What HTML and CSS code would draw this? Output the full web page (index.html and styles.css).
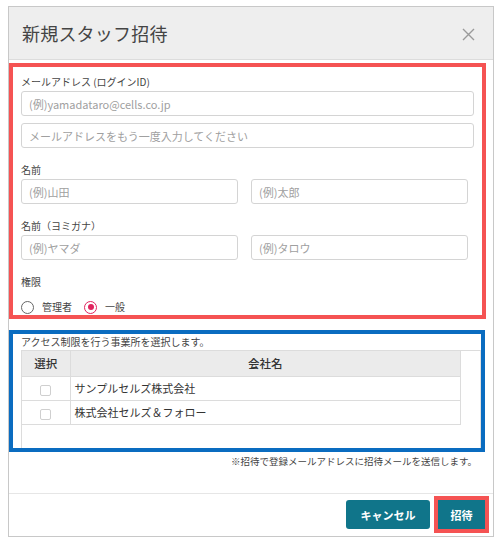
FILE: index.html
```html
<!DOCTYPE html>
<html lang="ja">
<head>
<meta charset="utf-8">
<title>新規スタッフ招待</title>
<link rel="stylesheet" href="styles.css">
</head>
<body>
<div class="modal">
  <div class="modal-header">
    <h1 class="modal-title">新規スタッフ招待</h1>
    <span class="close-btn" aria-label="閉じる">
      <svg width="13" height="13" viewBox="0 0 13 13"><path d="M1 1L12 12M12 1L1 12" stroke="#9a9a9a" stroke-width="1.4" fill="none"/></svg>
    </span>
  </div>
  <div class="modal-body">
    <div class="form-box">
      <div class="group">
        <div class="label">メールアドレス (ログインID)</div>
        <input class="input" type="text" placeholder="(例)yamadataro@cells.co.jp">
        <input class="input second" type="text" placeholder="メールアドレスをもう一度入力してください">
      </div>
      <div class="group">
        <div class="label">名前</div>
        <div class="two-col">
          <input class="input" type="text" placeholder="(例)山田">
          <input class="input" type="text" placeholder="(例)太郎">
        </div>
      </div>
      <div class="group">
        <div class="label">名前（ヨミガナ）</div>
        <div class="two-col">
          <input class="input" type="text" placeholder="(例)ヤマダ">
          <input class="input" type="text" placeholder="(例)タロウ">
        </div>
      </div>
      <div class="group last">
        <div class="label">権限</div>
        <div class="radios">
          <span class="radio"></span><span class="radio-label">管理者</span>
          <span class="radio checked"></span><span class="radio-label">一般</span>
        </div>
      </div>
    </div>
    <div class="access-box">
      <div class="access-text">アクセス制限を行う事業所を選択します。</div>
      <div class="table-wrap">
        <table class="table">
          <thead>
            <tr><th class="col-sel">選択</th><th>会社名</th></tr>
          </thead>
          <tbody>
            <tr><td class="col-sel"><span class="check"></span></td><td>サンプルセルズ株式会社</td></tr>
            <tr><td class="col-sel"><span class="check"></span></td><td>株式会社セルズ＆フォロー</td></tr>
          </tbody>
        </table>
      </div>
    </div>
    <div class="note">※招待で登録メールアドレスに招待メールを送信します。</div>
  </div>
  <div class="modal-footer">
    <button class="btn">キャンセル</button>
    <button class="btn primary">招待</button>
  </div>
</div>
</body>
</html>
```
FILE: styles.css
```css
* { box-sizing: border-box; }
html, body { margin: 0; padding: 0; background: #fff; }
body {
  padding: 6px 9px 0 8px;
  font-family: "Noto Sans CJK JP", "Noto Sans", sans-serif;
  color: #333;
}
.modal {
  width: 486px;
  height: 531px;
  border: 1px solid #c8c8c8;
  display: flex;
  flex-direction: column;
  background: #fff;
}
.modal-header {
  height: 53px;
  background: #eeeeee;
  border-bottom: 1px solid #dcdcdc;
  display: flex;
  align-items: center;
  justify-content: space-between;
  padding: 0 18px 0 13px;
}
.modal-title {
  margin: 0;
  font-size: 18px;
  font-weight: 400;
  color: #444;
  line-height: 1;
  letter-spacing: 0.2px;
}
.close-btn { display: flex; margin-top: 2px; }
.modal-body {
  flex: 1;
  padding-top: 3px;
}
.form-box {
  width: 477px;
  border: 4px solid #f55353;
  padding: 7px 8px 1px 8px;
}
.group { margin-bottom: 14px; }
.group.last { margin-bottom: 0; }
.label {
  font-size: 10px;
  line-height: 16px;
  height: 16px;
  margin-bottom: 1px;
  color: #444;
}
.input {
  display: block;
  width: 100%;
  height: 25px;
  border: 1px solid #d4d4d4;
  border-radius: 3px;
  padding: 0 7px;
  font-family: "Noto Sans CJK JP", "Noto Sans", sans-serif;
  font-size: 11px;
  color: #333;
  background: #fff;
  outline: none;
}
.input::placeholder { color: #a0a0a0; }
.input.second { margin-top: 7px; }
.two-col {
  display: grid;
  grid-template-columns: 217px 217px;
  column-gap: 13px;
}
.radios {
  display: flex;
  align-items: center;
  margin-top: 10px;
  height: 14px;
}
.radio {
  width: 13px;
  height: 13px;
  border: 1px solid #666;
  border-radius: 50%;
  display: inline-flex;
  align-items: center;
  justify-content: center;
  flex: none;
}
.radio.checked { border: 1.5px solid #e0245e; }
.radio.checked::after {
  content: "";
  width: 6px;
  height: 6px;
  border-radius: 50%;
  background: #e0245e;
}
.radio-label {
  font-size: 10px;
  color: #444;
  margin-left: 8px;
  margin-right: 12px;
  line-height: 14px;
}
.access-box {
  margin-top: 11px;
  width: 476px;
  height: 122px;
  border: 4px solid #0a6cc0;
  padding: 0 0 0 8px;
  display: flex;
  flex-direction: column;
  overflow: hidden;
}
.access-text {
  font-size: 10px;
  line-height: 16px;
  height: 16px;
  color: #444;
  margin-top: 0;
}
.table-wrap {
  flex: 1;
  border: 1px solid #dcdcdc;
  border-bottom: none;
  border-right-color: #e0e0e0;
}
.table {
  border-collapse: collapse;
  width: 439px;
  font-size: 11px;
}
.table th {
  background: #ebebeb;
  font-weight: 500;
  font-size: 11.5px;
  color: #333;
  height: 25px;
  padding: 0;
  border-right: 1px solid #dcdcdc;
  border-bottom: 1px solid #dcdcdc;
  text-align: center;
}
.table td {
  height: 24px;
  padding: 0 0 0 4px;
  border-right: 1px solid #dcdcdc;
  border-bottom: 1px solid #dcdcdc;
  color: #333;
}
.table .col-sel { width: 48px; text-align: center; padding: 0; }
.check {
  display: inline-block;
  width: 11px;
  height: 11px;
  border: 1px solid #cfcfcf;
  border-radius: 2px;
  vertical-align: middle;
  background: #fff;
}
.note {
  text-align: right;
  font-size: 9.5px;
  color: #444;
  padding-right: 16px;
  margin-top: 2px;
  line-height: 14px;
}
.modal-footer {
  border-top: 1px solid #e6e6e6;
  height: 43px;
  display: flex;
  justify-content: flex-end;
  align-items: flex-start;
  padding: 6px 8px 0 0;
}
.btn {
  height: 29px;
  padding: 0 12px;
  background: #10758a;
  color: #fff;
  border: none;
  border-radius: 3px;
  font-family: "Noto Sans CJK JP", "Noto Sans", sans-serif;
  font-size: 11px;
  font-weight: 700;
  width: 84px;
}
.btn.primary {
  width: 47px;
  margin-left: 8px;
  border-radius: 0;
  outline: 4px solid #f55353;
  outline-offset: 0;
}
```
